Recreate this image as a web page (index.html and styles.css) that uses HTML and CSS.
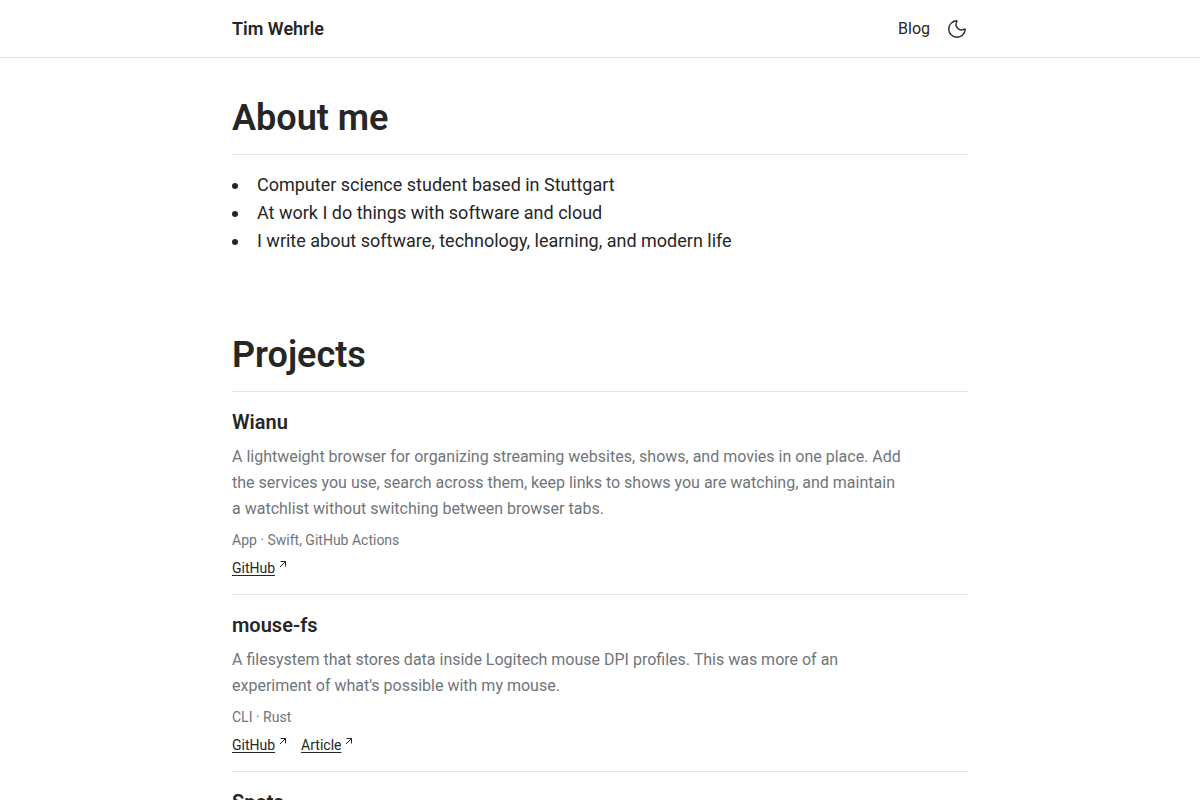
FILE: index.html
```html
<!DOCTYPE html>
<html lang="en">
<head>
<meta charset="utf-8">
<meta name="viewport" content="width=device-width, initial-scale=1">
<title>Tim Wehrle</title>
<link rel="stylesheet" href="styles.css">
</head>
<body>
<header class="site-header">
  <div class="container header-row">
    <a class="brand" href="/">Tim Wehrle</a>
    <nav class="nav">
      <a href="/blog">Blog</a>
      <button class="theme-toggle" type="button" aria-label="Toggle theme">
        <svg width="22" height="22" viewBox="0 0 24 24" fill="none" stroke="currentColor" stroke-width="1.5" stroke-linecap="round" stroke-linejoin="round"><path d="M20.985 12.486a9 9 0 1 1-9.473-9.472c.405-.022.617.46.402.803a6 6 0 0 0 8.268 8.268c.344-.215.825-.004.803.401"/></svg>
      </button>
    </nav>
  </div>
</header>
<main class="container">
  <section class="section">
    <h1 class="heading">About me</h1>
    <ul class="about">
      <li>Computer science student based in Stuttgart</li>
      <li>At work I do things with software and cloud</li>
      <li>I write about software, technology, learning, and modern life</li>
    </ul>
  </section>
  <section class="section">
    <h2 class="heading">Projects</h2>
    <article class="project">
      <h3 class="name">Wianu</h3>
      <p class="description">A lightweight browser for organizing streaming websites, shows, and movies in one place. Add the services you use, search across them, keep links to shows you are watching, and maintain a watchlist without switching between browser tabs.</p>
      <p class="meta">App · Swift, GitHub Actions</p>
      <div class="links">
        <a href="#wianu"><span>GitHub</span><svg class="arrow" viewBox="0 0 8 8"><path d="M1 7 6.5 1.5M1.5 1.5h5V6.5"/></svg></a>
      </div>
    </article>
    <article class="project">
      <h3 class="name">mouse-fs</h3>
      <p class="description">A filesystem that stores data inside Logitech mouse DPI profiles. This was more of an experiment of what's possible with my mouse.</p>
      <p class="meta">CLI · Rust</p>
      <div class="links">
        <a href="#mouse-fs"><span>GitHub</span><svg class="arrow" viewBox="0 0 8 8"><path d="M1 7 6.5 1.5M1.5 1.5h5V6.5"/></svg></a>
        <a href="#article"><span>Article</span><svg class="arrow" viewBox="0 0 8 8"><path d="M1 7 6.5 1.5M1.5 1.5h5V6.5"/></svg></a>
      </div>
    </article>
    <article class="project">
      <h3 class="name">Spots</h3>
    </article>
  </section>
</main>
</body>
</html>
```
FILE: styles.css
```css
* { box-sizing: border-box; margin: 0; padding: 0; }
html { scrollbar-width: none; }
body { background: #fff; color: #262626; font-family: Roboto, sans-serif; font-size: 18px; line-height: 28px; }
a { color: inherit; text-decoration: none; }
.container { max-width: 768px; margin: 0 auto; padding: 0 16px; }
.site-header { border-bottom: 1px solid #e5e5e5; }
.header-row { display: flex; align-items: center; justify-content: space-between; min-height: 57px; }
.brand { font-weight: 600; }
.nav { display: flex; align-items: center; gap: 16px; font-size: 16px; }
.theme-toggle { display: flex; border: 0; background: none; color: inherit; cursor: pointer; }
.section { padding-top: 36px; margin-bottom: 40px; }
.heading { padding-bottom: 12px; border-bottom: 1px solid #e5e5e5; font-size: 36px; line-height: 48px; font-weight: 600; }
.about { padding-top: 16px; list-style: disc inside; }
.project { padding: 16px 0; border-bottom: 1px solid #e5e5e5; }
.name { font-size: 20px; line-height: 28px; font-weight: 600; }
.description { max-width: 672px; margin-top: 8px; color: #70757a; font-size: 16px; line-height: 26px; }
.meta { margin-top: 8px; color: #70757a; font-size: 14px; line-height: 20px; }
.links { display: flex; gap: 14px; margin-top: 8px; font-size: 14px; line-height: 20px; }
.links a { display: flex; gap: 4px; }
.links span { text-decoration: underline; text-underline-offset: 2px; }
.arrow { width: 8px; height: 8px; margin-top: 2px; fill: none; stroke: currentColor; }
```
